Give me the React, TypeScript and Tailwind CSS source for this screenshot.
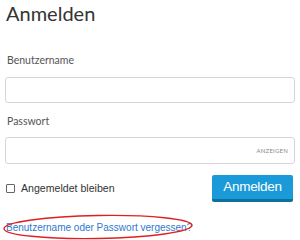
export default function App() {
  return (
    <div className="w-[300px] h-[240px] bg-white overflow-hidden relative">
      <div className="px-[5px]">
        <h1 className="text-[20px] leading-[26px] text-[#333] pl-[1px] font-['Lato','Noto_Sans',sans-serif]">Anmelden</h1>

        <label className="block mt-[27px] text-[10.5px] leading-[14px] text-[#555] pl-[2px] font-['Lato','Noto_Sans',sans-serif]">
          Benutzername
        </label>
        <div className="mt-[10px] h-[26px] w-[290px] rounded-[3px] border border-[#d6d6d6]" />

        <label className="block mt-[11px] text-[10.5px] leading-[14px] text-[#555] pl-[2px] font-['Lato','Noto_Sans',sans-serif]">
          Passwort
        </label>
        <div className="mt-[9px] h-[27px] w-[290px] rounded-[3px] border border-[#d6d6d6] flex items-center justify-end pr-[6px]">
          <span className="text-[6px] tracking-[0.2px] text-[#888] font-['Lato','Noto_Sans',sans-serif]">ANZEIGEN</span>
        </div>

        <div className="flex items-center justify-between mt-[11px] pr-[2px]">
          <div className="flex items-center gap-[6px] pl-[1px]">
            <span className="w-[9px] h-[9px] border border-[#666] rounded-[1px]" />
            <span className="text-[10.6px] text-[#333] font-['Liberation_Sans',Arial,sans-serif]">Angemeldet bleiben</span>
          </div>
          <button className="w-[81px] h-[27px] bg-[#1a9ad8] border-b-[3px] border-[#0f6f9f] rounded-[2px] text-white text-[13.5px] tracking-[-0.3px] leading-[20px] font-['Liberation_Sans',Arial,sans-serif]">
            Anmelden
          </button>
        </div>

        <div className="relative mt-[12px] h-[26px] flex items-center">
          <span className="pl-[1px] text-[10px] text-[#2f78cf] font-['Liberation_Sans',Arial,sans-serif]">
            Benutzername oder Passwort vergessen?
          </span>
          <svg className="absolute left-[-3px] top-0" width="192" height="26" viewBox="0 0 192 26">
            <ellipse cx="96" cy="13" rx="94" ry="11.5" fill="none" stroke="#e02020" strokeWidth="1.4" transform="rotate(-1 96 13)" />
          </svg>
        </div>
      </div>
    </div>
  );
}
